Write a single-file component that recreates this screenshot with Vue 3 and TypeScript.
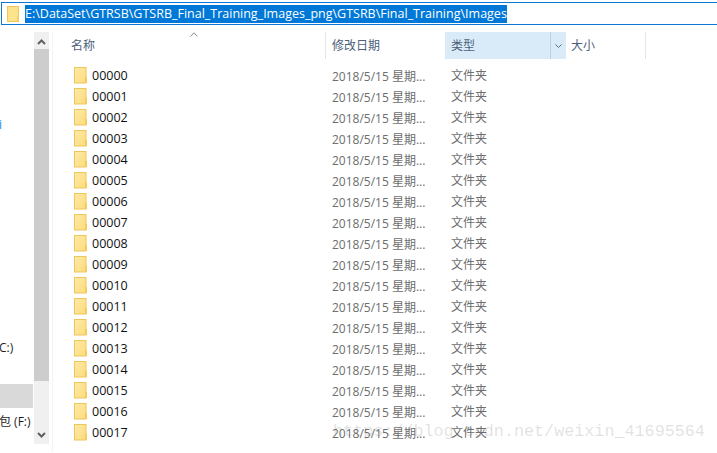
<script setup lang="ts">
const rows = Array.from({ length: 18 }, (_, i) => String(i).padStart(5, '0'))
</script>

<template>
  <div class="window">
    <div class="address">
      <svg class="addr-folder" width="13" height="16" viewBox="0 0 13 16">
        <rect x="0.5" y="0.5" width="11" height="15" fill="#fde38c" stroke="#eec65a" />
        <rect x="10" y="10" width="2" height="5" fill="#f4cf66" />
      </svg>
      <span class="path">E:\DataSet\GTRSB\GTSRB_Final_Training_Images_png\GTSRB\Final_Training\Images</span>
    </div>

    <div class="main">
      <aside class="nav">
        <div class="nav-items">
          <span class="nav-text nav-i">i</span>
          <span class="nav-text nav-c">C:)</span>
          <div class="nav-selected"></div>
          <span class="nav-text nav-f">包 (F:)</span>
        </div>
        <div class="scrollbar">
          <svg class="arrow" width="9" height="6" viewBox="0 0 9 6">
            <path d="M1 5 L4.5 1.5 L8 5" fill="none" stroke="#606060" stroke-width="2" />
          </svg>
          <div class="thumb"></div>
          <svg class="arrow arrow-down" width="9" height="6" viewBox="0 0 9 6">
            <path d="M1 1 L4.5 4.5 L8 1" fill="none" stroke="#606060" stroke-width="2" />
          </svg>
        </div>
      </aside>

      <section class="list">
        <div class="head">
          <div class="col col-name">
            <span>名称</span>
            <svg class="sort" width="8" height="5" viewBox="0 0 8 5">
              <path d="M0.5 4.5 L4 0.8 L7.5 4.5" fill="none" stroke="#8a8a8a" />
            </svg>
          </div>
          <div class="col col-date"><span>修改日期</span></div>
          <div class="col col-type">
            <span class="type-label">类型</span>
            <span class="type-drop">
              <svg width="7" height="4" viewBox="0 0 7 4">
                <path d="M0.5 0.5 L3.5 3.5 L6.5 0.5" fill="none" stroke="#5b6b7a" />
              </svg>
            </span>
          </div>
          <div class="col col-size"><span>大小</span></div>
        </div>

        <div class="rows">
          <div v-for="name in rows" :key="name" class="row">
            <div class="cell-name">
              <svg width="14" height="17" viewBox="0 0 14 17">
                <defs>
                  <linearGradient id="fold" x1="0" y1="0" x2="1" y2="1">
                    <stop offset="0" stop-color="#fde9a8" />
                    <stop offset="1" stop-color="#fddc7c" />
                  </linearGradient>
                </defs>
                <rect x="0.5" y="0.5" width="11.5" height="15.5" fill="url(#fold)" stroke="#eec65a" />
                <rect x="11" y="10" width="2" height="6" fill="#f3cb5e" />
              </svg>
              <span>{{ name }}</span>
            </div>
            <div class="cell-date">2018/5/15 星期...</div>
            <div class="cell-type">文件夹</div>
          </div>
        </div>
      </section>
    </div>

    <div class="watermark">https://blog.csdn.net/weixin_41695564</div>
  </div>
</template>

<style scoped>
.window {
  position: relative;
  width: 717px;
  height: 453px;
  overflow: hidden;
  background: #fff;
  font-family: "Open Sans", "Noto Sans CJK SC", sans-serif;
  font-size: 12px;
}

.address {
  display: flex;
  align-items: center;
  gap: 5px;
  box-sizing: border-box;
  height: 23px;
  margin-top: 2px;
  margin-left: 1px;
  padding-left: 5px;
  border: 1px solid #0a78d7;
  border-right: 0;
}

.addr-folder {
  flex: none;
}

.path {
  background: #0078d7;
  color: #fff;
  font-size: 12.5px;
  line-height: 18px;
  white-space: nowrap;
}

.main {
  display: flex;
  height: 420px;
  margin-top: 7px;
}

.nav {
  display: flex;
  flex: none;
  width: 49px;
}

.nav-items {
  position: relative;
  width: 34px;
}

.nav-text {
  position: absolute;
  left: -1px;
  color: #1e1e1e;
  white-space: nowrap;
}

.nav-i {
  top: 84px;
  color: #1e88e5;
}

.nav-c {
  top: 307px;
}

.nav-f {
  top: 380px;
}

.nav-selected {
  position: absolute;
  top: 352px;
  left: 0;
  width: 33px;
  height: 24px;
  background: #d9d9d9;
}

.scrollbar {
  display: flex;
  flex-direction: column;
  align-items: center;
  box-sizing: border-box;
  width: 15px;
  height: 412px;
  padding-top: 7px;
  background: #f0f0f0;
}

.arrow {
  flex: none;
}

.thumb {
  flex: none;
  width: 15px;
  height: 332px;
  margin-top: 4px;
  background: #cdcdcd;
}

.arrow-down {
  margin-top: 51px;
}

.list {
  flex: 1;
  border-left: 1px solid #f3f3f3;
  margin-left: 3px;
}

.head {
  display: flex;
  height: 27px;
  color: #4c607a;
  font-size: 12px;
}

.col {
  display: flex;
  position: relative;
  align-items: center;
  box-sizing: border-box;
}

.col > span:first-child {
  margin-bottom: 2px;
}

.col-name {
  width: 273px;
  padding-left: 18px;
  border-right: 1px solid #e5e5e5;
}

.sort {
  position: absolute;
  top: 0;
  left: 137px;
}

.col-date {
  width: 119px;
  padding-left: 6px;
}

.col-type {
  justify-content: space-between;
  width: 121px;
  background: #d9ebf9;
}

.type-label {
  padding-left: 6px;
}

.type-drop {
  display: flex;
  align-items: center;
  justify-content: center;
  width: 15px;
  height: 100%;
  border-left: 1px solid #bcd0e0;
}

.col-size {
  width: 80px;
  padding-left: 5px;
  border-right: 1px solid #e5e5e5;
}

.rows {
  margin-top: 6px;
}

.row {
  display: flex;
  align-items: center;
  height: 21px;
}

.cell-name {
  display: flex;
  align-items: center;
  gap: 4px;
  box-sizing: border-box;
  width: 273px;
  padding-left: 21px;
  color: #111;
  font-size: 12.5px;
}

.cell-date {
  width: 119px;
  padding-left: 6px;
  box-sizing: border-box;
  color: #6d6d6d;
}

.cell-type {
  margin-bottom: 1px;
  padding-left: 6px;
  color: #6d6d6d;
}

.watermark {
  position: absolute;
  top: 422px;
  left: 333px;
  color: rgba(120, 120, 120, 0.22);
  font-family: "Liberation Mono", monospace;
  font-size: 16.75px;
  white-space: nowrap;
}
</style>
